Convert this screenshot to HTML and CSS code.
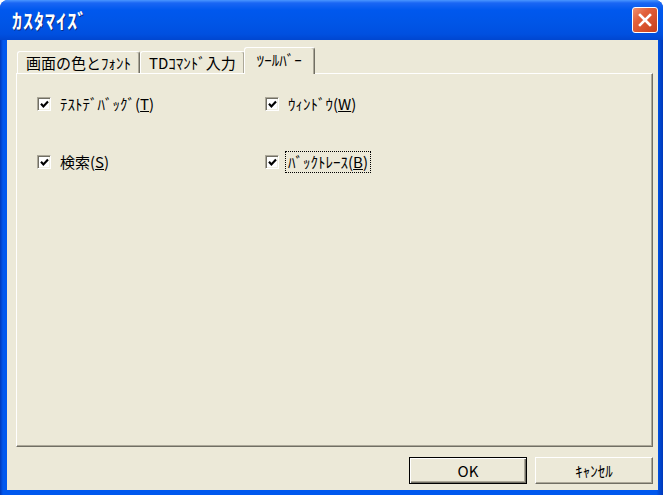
FILE: index.html
```html
<!DOCTYPE html>
<html lang="ja">
<head>
  <meta charset="UTF-8">
  <title>ｶｽﾀﾏｲｽﾞ</title>
  <link rel="stylesheet" href="styles.css">
</head>
<body>
  <div class="window">
    <!-- タイトルバー -->
    <div class="titlebar">
      <span class="title">ｶｽﾀﾏｲｽﾞ</span>
      <span class="close">
        <svg width="14" height="14" viewBox="0 0 14 14">
          <path d="M2 2 L12 12 M12 2 L2 12" stroke="#fff" stroke-width="2.6" stroke-linecap="square"/>
        </svg>
      </span>
    </div>
    <!-- クライアント領域 -->
    <div class="client">
      <div class="tabs">
        <div class="tab">画面の色とﾌｫﾝﾄ</div>
        <div class="tab">TDｺﾏﾝﾄﾞ入力</div>
        <div class="tab active">ﾂｰﾙﾊﾞｰ</div>
      </div>
      <div class="panel">
        <div class="options">
          <label class="option">
            <span class="check"><svg width="9" height="9" viewBox="0 0 9 9"><path d="M1 3.8 L3.4 6.4 L8 1.6" stroke="#000" stroke-width="2.2" fill="none"/></svg></span>
            <span class="text">ﾃｽﾄﾃﾞﾊﾞｯｸﾞ(<u>T</u>)</span>
          </label>
          <label class="option">
            <span class="check"><svg width="9" height="9" viewBox="0 0 9 9"><path d="M1 3.8 L3.4 6.4 L8 1.6" stroke="#000" stroke-width="2.2" fill="none"/></svg></span>
            <span class="text">ｳｨﾝﾄﾞｳ(<u>W</u>)</span>
          </label>
          <label class="option">
            <span class="check"><svg width="9" height="9" viewBox="0 0 9 9"><path d="M1 3.8 L3.4 6.4 L8 1.6" stroke="#000" stroke-width="2.2" fill="none"/></svg></span>
            <span class="text">検索(<u>S</u>)</span>
          </label>
          <label class="option">
            <span class="check"><svg width="9" height="9" viewBox="0 0 9 9"><path d="M1 3.8 L3.4 6.4 L8 1.6" stroke="#000" stroke-width="2.2" fill="none"/></svg></span>
            <span class="text focus">ﾊﾞｯｸﾄﾚｰｽ(<u>B</u>)</span>
          </label>
        </div>
      </div>
      <div class="buttons">
        <button class="btn default">OK</button>
        <button class="btn">ｷｬﾝｾﾙ</button>
      </div>
    </div>
  </div>
</body>
</html>
```

FILE: styles.css
```css
/* ページ全体 */
body {
  margin: 0;
  background: #fff;
  font-family: "Noto Sans CJK JP", "Noto Sans", sans-serif;
  font-size: 15px;
  color: #000;
}
/* XP風ウィンドウ枠 */
.window {
  width: 663px;
  height: 495px;
  display: flex;
  flex-direction: column;
  border-radius: 8px 8px 0 0;
  background: linear-gradient(90deg, #0038b8 0, #0058ee 3px, #0058ee 99%, #0038b8 100%);
}
.titlebar {
  height: 40px;
  display: flex;
  align-items: center;
  justify-content: space-between;
  padding: 0 5px 0 12px;
  border-radius: 8px 8px 0 0;
  background: linear-gradient(#4a96ff 0, #1a66f4 3px, #0058ee 10px, #0055e6 60%, #0050e0 85%, #0046d0 100%);
}
.title {
  color: #fff;
  font-weight: bold;
  font-size: 20px;
  letter-spacing: 1px;
  text-shadow: 1px 1px #0a2a80;
}
.close {
  width: 24px;
  height: 24px;
  display: flex;
  align-items: center;
  justify-content: center;
  border: 1px solid #fff;
  border-radius: 3px;
  background: linear-gradient(135deg, #f09070 0, #e2603a 35%, #c8401c 100%);
}
/* クライアント領域 */
.client {
  flex: 1;
  display: flex;
  flex-direction: column;
  margin: 0 5px 5px 7px;
  padding: 7px 5px 6px 9px;
  background: #ece9d8;
}
/* タブ */
.tabs {
  display: flex;
  align-items: flex-end;
  padding-left: 1px;
  height: 26px;
}
.tab {
  height: 21px;
  line-height: 21px;
  padding: 0 8px;
  border-top: 1px solid #fff;
  border-left: 1px solid #fff;
  border-right: 1px solid #716f64;
  border-radius: 3px 3px 0 0;
  box-shadow: inset -1px 0 #aca899;
}
.tab.active {
  position: relative;
  z-index: 1;
  height: 26px;
  line-height: 24px;
  margin: 0 -1px -1px -1px;
  padding: 0 12px;
  background: #ece9d8;
}
.panel {
  flex: 1;
  border-top: 1px solid #fff;
  border-left: 1px solid #fff;
  border-right: 1px solid #716f64;
  border-bottom: 1px solid #716f64;
  box-shadow: inset -1px -1px #aca899;
  padding: 19px 0 0 20px;
}
/* チェックボックス */
.options {
  display: grid;
  grid-template-columns: 228px 228px;
  grid-auto-rows: 22px;
  row-gap: 36px;
}
.option {
  display: flex;
  align-items: center;
  gap: 6px;
}
.check {
  width: 12px;
  height: 12px;
  display: flex;
  align-items: center;
  justify-content: center;
  background: #fff;
  border-top: 1px solid #aca899;
  border-left: 1px solid #aca899;
  border-right: 1px solid #fff;
  border-bottom: 1px solid #fff;
  box-shadow: inset 1px 1px #716f64, inset -1px -1px #f1efe2;
}
.text {
  padding: 0 2px;
  border: 1px dotted transparent;
  line-height: 20px;
}
.text.focus {
  border-color: #000;
}
/* ボタン */
.buttons {
  display: flex;
  justify-content: flex-end;
  gap: 8px;
  margin-top: 10px;
}
.btn {
  width: 118px;
  height: 27px;
  font: inherit;
  background: #ece9d8;
  border-top: 1px solid #fff;
  border-left: 1px solid #fff;
  border-right: 1px solid #716f64;
  border-bottom: 1px solid #716f64;
  box-shadow: inset -1px -1px #aca899;
  padding: 0;
}
.btn.default {
  border: 1px solid #000;
  box-shadow: inset 1px 1px #fff, inset -1px -1px #716f64, inset -2px -2px #aca899;
}
```
